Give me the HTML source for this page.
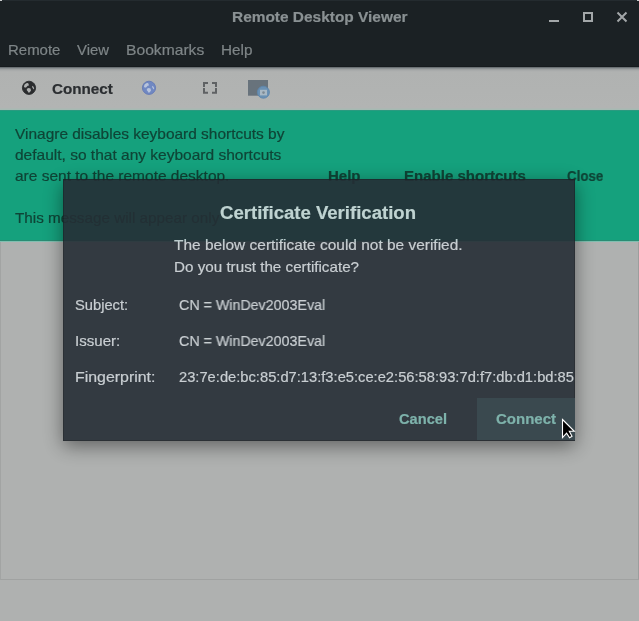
<!DOCTYPE html>
<html><head><meta charset="utf-8">
<style>
*{margin:0;padding:0;box-sizing:border-box}
html,body{width:639px;height:621px;overflow:hidden;background:#afb1b0;font-family:"Liberation Sans",sans-serif;position:relative}
.t{position:absolute;white-space:nowrap;line-height:1;transform-origin:0 0;-webkit-font-smoothing:antialiased;will-change:transform;-webkit-text-stroke:0.2px currentColor}
.r{position:absolute}
#hdr{position:absolute;left:0;top:0;width:639px;height:67px;background:#1b2124}
#tb{position:absolute;left:0;top:67px;width:639px;height:43px;background:linear-gradient(#575d60 0px,#7f8588 1px,#979b9c 2px,#a5a8a8 3px,#acaeae 4px,#b0b2b1 5px,#b2b4b3 41px,#a6bab3 42px)}
#info{position:absolute;left:0;top:110px;width:639px;height:130px;background:#15a17d}
#content{position:absolute;left:0;top:242px;width:639px;height:338px;background:#afb1b0;border-left:1px solid #a2a4a3;border-right:1px solid #9c9e9d;border-bottom:1px solid #a0a2a1}
#dlgwrap{position:absolute;left:0;top:0;width:639px;height:621px;opacity:0.9}
#dlg{position:absolute;left:63px;top:179px;width:512px;height:262px;background:#252d35;border:1px solid #1c2228;box-shadow:0 5px 18px rgba(0,0,0,0.5);overflow:hidden}
</style></head><body>
<div id="hdr"></div>
<div id="tb"></div>
<div class="r" style="left:0;top:66px;width:639px;height:1px;background:#161b1e"></div>
<div id="info"></div>
<div id="content"></div>
<div class="r" style="left:0;top:110px;width:639px;height:1px;background:#2b9a80"></div>
<div class="r" style="left:0;top:240px;width:639px;height:1px;background:#2a8c73"></div>
<div class="r" style="left:0;top:241px;width:639px;height:1px;background:#80bfb0"></div>

<div class="r" style="left:0;top:0;width:639px;height:1px;background:#242b2f"></div>
<div class="r" style="left:0;top:0;width:2px;height:1px;background:#c9cccd"></div>
<div class="r" style="left:637px;top:0;width:2px;height:1px;background:#c9cccd"></div>
<svg class="r" style="left:0;top:0" width="639" height="67">
<rect x="549" y="20" width="10" height="2" fill="#a3a7a9"/>
<rect x="584" y="13" width="8" height="8" fill="none" stroke="#a3a7a9" stroke-width="2"/>
<path d="M617.5 12.5 L626.5 21.5 M626.5 12.5 L617.5 21.5" stroke="#a3a7a9" stroke-width="2"/>
</svg>
<svg class="r" style="left:0;top:67px" width="639" height="43" viewBox="0 67 639 43">
<circle cx="29" cy="87.8" r="6.6" fill="#2a2c2e" stroke="#2a2c2e" stroke-width="0.9"/><path d="M23.85 86.60 L24.60 84.60 L26.20 83.20 L28.00 83.00 L28.80 84.60 L28.40 86.00 L27.50 85.80 L26.40 87.20 L24.90 87.80Z M26.90 88.70 L28.60 87.90 L30.50 88.60 L31.00 90.40 L29.80 92.30 L28.60 92.80 L27.70 91.30 L26.80 90.20Z M32.00 85.80 L33.30 86.50 L34.20 88.30 L33.80 89.40 L32.40 87.80Z" fill="#aeb0af"/>
<circle cx="149" cy="87.8" r="6.6" fill="#7088c2" stroke="#6479b6" stroke-width="0.9"/><path d="M143.85 86.60 L144.60 84.60 L146.20 83.20 L148.00 83.00 L148.80 84.60 L148.40 86.00 L147.50 85.80 L146.40 87.20 L144.90 87.80Z M146.90 88.70 L148.60 87.90 L150.50 88.60 L151.00 90.40 L149.80 92.30 L148.60 92.80 L147.70 91.30 L146.80 90.20Z M152.00 85.80 L153.30 86.50 L154.20 88.30 L153.80 89.40 L152.40 87.80Z" fill="#b8c4dc"/>
<path d="M204 87 V83 H208 M212 83 H216 V87 M216 88 V92.8 H212 M208 92.8 H204 V88" fill="none" stroke="#5f6264" stroke-width="2"/>
<rect x="248" y="80" width="20" height="15.7" fill="#68737c"/>
<circle cx="263.4" cy="92.2" r="6.0" fill="#6a91b4" stroke="#5d86ab" stroke-width="0.9"/>
<rect x="260" y="89.8" width="7" height="5.6" fill="#a8b8c4"/>
<circle cx="263.5" cy="92.6" r="1.3" fill="#7d8a94"/>
</svg>
<div class="t" style="left:232.00px;top:9.73px;font-size:14.5px;font-weight:bold;color:#8a9193;transform:scaleX(1.0640);">Remote Desktop Viewer</div>
<div class="t" style="left:7.60px;top:42.51px;font-size:14.4px;color:#7e8587;transform:scaleX(1.0397);">Remote</div>
<div class="t" style="left:77.30px;top:42.51px;font-size:14.4px;color:#7e8587;transform:scaleX(1.0336);">View</div>
<div class="t" style="left:125.70px;top:42.51px;font-size:14.4px;color:#7e8587;transform:scaleX(1.0875);">Bookmarks</div>
<div class="t" style="left:221.00px;top:42.51px;font-size:14.4px;color:#7e8587;transform:scaleX(1.0611);">Help</div>
<div class="t" style="left:51.70px;top:81.61px;font-size:14.4px;font-weight:bold;color:#2b2e31;transform:scaleX(1.0573);">Connect</div>
<div class="t" style="left:15.00px;top:126.64px;font-size:14.6px;color:#0f4436;transform:scaleX(1.0587);">Vinagre disables keyboard shortcuts by</div>
<div class="t" style="left:15.00px;top:147.64px;font-size:14.6px;color:#0f4436;transform:scaleX(1.0624);">default, so that any keyboard shortcuts</div>
<div class="t" style="left:15.00px;top:168.64px;font-size:14.6px;color:#0f4436;transform:scaleX(1.0615);">are sent to the remote desktop.</div>
<div class="r" style="left:0;top:190px;width:221px;height:50px;overflow:hidden"><div class="r" style="left:0;top:-190px;width:639px;height:621px"><div class="t" style="left:15.00px;top:210.64px;font-size:14.6px;color:#0f4436;transform:scaleX(1.0450);">This message will appear only once.</div></div></div>
<div class="t" style="left:327.50px;top:168.51px;font-size:14.4px;font-weight:bold;color:#0f4436;transform:scaleX(1.0425);">Help</div>
<div class="t" style="left:403.60px;top:168.51px;font-size:14.4px;font-weight:bold;color:#0f4436;transform:scaleX(1.0440);">Enable shortcuts</div>
<div class="t" style="left:566.70px;top:168.51px;font-size:14.4px;font-weight:bold;color:#0f4436;transform:scaleX(0.9225);">Close</div>
<div id="dlgwrap">
<div id="dlg"></div>
<div class="r" style="left:477px;top:398px;width:98px;height:42px;background:#2d3e44"></div>
<div style="position:absolute;left:63px;top:179px;width:512px;height:261px;overflow:hidden"><div style="position:absolute;left:-63px;top:-179px;width:639px;height:621px">
<div class="t" style="left:220.30px;top:203.51px;font-size:18.3px;font-weight:bold;color:#d3dadb;transform:scaleX(1.0153);">Certificate Verification</div>
<div class="t" style="left:173.80px;top:238.41px;font-size:14.4px;color:#ccd2d6;transform:scaleX(1.0736);">The below certificate could not be verified.</div>
<div class="t" style="left:173.80px;top:259.71px;font-size:14.4px;color:#ccd2d6;transform:scaleX(1.0564);">Do you trust the certificate?</div>
<div class="t" style="left:75.00px;top:297.51px;font-size:14.4px;color:#ccd2d6;transform:scaleX(1.0220);">Subject:</div>
<div class="t" style="left:178.50px;top:297.51px;font-size:14.4px;color:#ccd2d6;transform:scaleX(0.9907);">CN = WinDev2003Eval</div>
<div class="t" style="left:74.70px;top:333.51px;font-size:14.4px;color:#ccd2d6;transform:scaleX(1.0486);">Issuer:</div>
<div class="t" style="left:178.50px;top:333.51px;font-size:14.4px;color:#ccd2d6;transform:scaleX(0.9907);">CN = WinDev2003Eval</div>
<div class="t" style="left:74.80px;top:369.51px;font-size:14.4px;color:#ccd2d6;transform:scaleX(1.1048);">Fingerprint:</div>
<div class="t" style="left:178.80px;top:369.51px;font-size:14.4px;color:#ccd2d6;transform:scaleX(1.0219);">23:7e:de:bc:85:d7:13:f3:e5:ce:e2:56:58:93:7d:f7:db:d1:bd:85</div>
<div class="t" style="left:398.70px;top:412.31px;font-size:14.4px;font-weight:bold;color:#79b3ab;transform:scaleX(1.0163);">Cancel</div>
<div class="t" style="left:495.70px;top:412.31px;font-size:14.4px;font-weight:bold;color:#79b3ab;transform:scaleX(1.0434);">Connect</div>
</div></div>
</div>
<svg class="r" style="left:0;top:0" width="639" height="621">
<path d="M562.5 419.5 L574.3 431.3 L569.3 431.3 L572 436.3 L569.6 437.8 L566.6 433.2 L562.5 437.6 Z" fill="#000" stroke="#fff" stroke-width="1.1" stroke-linejoin="miter"/>
</svg>
</body></html>
